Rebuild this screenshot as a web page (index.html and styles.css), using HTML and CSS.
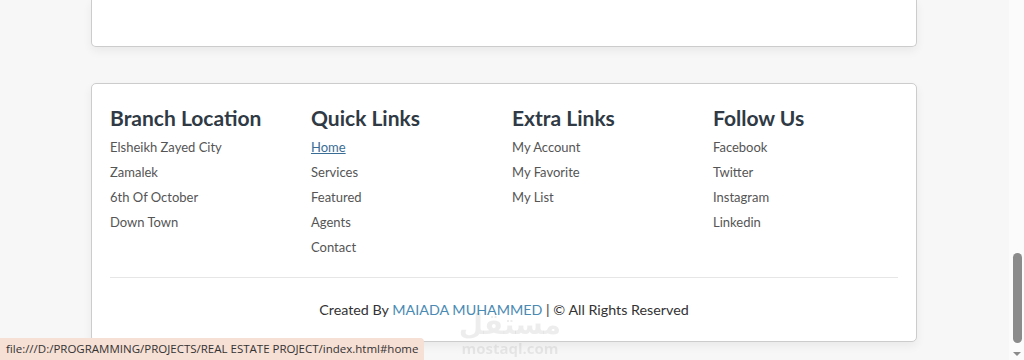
FILE: index.html
```html
<!DOCTYPE html>
<html lang="en">
<head>
  <meta charset="UTF-8">
  <meta name="viewport" content="width=device-width, initial-scale=1.0">
  <title>Real Estate Project</title>
  <link rel="stylesheet" href="styles.css">
</head>
<body>
  <div class="page">
    <section class="box top-box"></section>

    <footer class="box footer">
      <div class="footer-cols">
        <div class="col">
          <h3>Branch Location</h3>
          <a href="#">Elsheikh Zayed City</a>
          <a href="#">Zamalek</a>
          <a href="#">6th Of October</a>
          <a href="#">Down Town</a>
        </div>
        <div class="col">
          <h3>Quick Links</h3>
          <a href="#home" class="hover">Home</a>
          <a href="#">Services</a>
          <a href="#">Featured</a>
          <a href="#">Agents</a>
          <a href="#">Contact</a>
        </div>
        <div class="col">
          <h3>Extra Links</h3>
          <a href="#">My Account</a>
          <a href="#">My Favorite</a>
          <a href="#">My List</a>
        </div>
        <div class="col">
          <h3>Follow Us</h3>
          <a href="#">Facebook</a>
          <a href="#">Twitter</a>
          <a href="#">Instagram</a>
          <a href="#">Linkedin</a>
        </div>
      </div>
      <p class="credit">Created By <span>MAIADA MUHAMMED</span> | &copy; All Rights Reserved</p>
    </footer>
  </div>

  <div class="watermark">
    <div class="wm-ar">مستقل</div>
    <div class="wm-en">mostaql.com</div>
  </div>

  <div class="status">file:///D:/PROGRAMMING/PROJECTS/REAL ESTATE PROJECT/index.html#home</div>

  <div class="scrollbar"><div class="thumb"></div><div class="arrow"></div></div>
</body>
</html>
```

FILE: styles.css
```css
* {
  box-sizing: border-box;
}
html, body {
  height: 100%;
  overflow: hidden;
}
body {
  margin: 0;
  background: #f7f7f7;
  font-family: 'Lato', sans-serif;
  color: #555;
}
.page {
  width: 1008px;
  display: flex;
  flex-direction: column;
  align-items: center;
  gap: 36px;
}
.box {
  width: 826px;
  background: #fff;
  border: 1px solid #ccc;
  border-radius: 5px;
  box-shadow: 0 4px 10px rgba(0, 0, 0, 0.06);
}
.top-box {
  height: 47px;
  border-top: none;
  border-radius: 0 0 5px 5px;
}
.footer {
  padding: 21px 18px 0;
  height: 259px;
}
.footer-cols {
  display: grid;
  grid-template-columns: repeat(4, 1fr);
  gap: 16px;
  padding-bottom: 17px;
  border-bottom: 1px solid #e6e6e6;
}
.col {
  display: flex;
  flex-direction: column;
}
.col h3 {
  margin: 0 0 4px;
  font-size: 21px;
  font-weight: 700;
  color: #2f3a45;
  line-height: 26px;
}
.col a {
  font-size: 13px;
  line-height: 25px;
  color: #555;
  text-decoration: none;
}
.col a.hover {
  color: #3a6d96;
  text-decoration: underline;
}
.credit {
  margin: 23px 0 0;
  text-align: center;
  font-size: 14.3px;
  color: #333;
}
.credit span {
  color: #4a8ab3;
}
.watermark {
  position: fixed;
  left: 455px;
  top: 310px;
  width: 110px;
  text-align: center;
  color: rgba(0, 0, 0, 0.07);
  pointer-events: none;
}
.wm-ar {
  font-family: 'DejaVu Sans', sans-serif;
  font-size: 28px;
  font-weight: 700;
  line-height: 30px;
}
.wm-en {
  font-family: 'Open Sans', sans-serif;
  font-size: 15px;
  font-weight: 700;
  line-height: 16px;
}
.status {
  position: fixed;
  left: 0;
  bottom: 0;
  height: 22px;
  padding: 0 6px;
  background: #f6dfd4;
  border-top-right-radius: 4px;
  font-family: 'Open Sans', sans-serif;
  font-size: 11.5px;
  line-height: 22px;
  color: #333;
}
.scrollbar {
  position: fixed;
  top: 0;
  right: 0;
  width: 15px;
  height: 100%;
  background: #fbfbfb;
}
.thumb {
  position: absolute;
  left: 4px;
  top: 253px;
  width: 9px;
  height: 90px;
  border-radius: 5px;
  background: #8b8b8b;
}
.arrow {
  position: absolute;
  left: 4px;
  bottom: 4px;
  width: 0;
  height: 0;
  border-left: 4px solid transparent;
  border-right: 4px solid transparent;
  border-top: 4px solid #8b8b8b;
}
```
